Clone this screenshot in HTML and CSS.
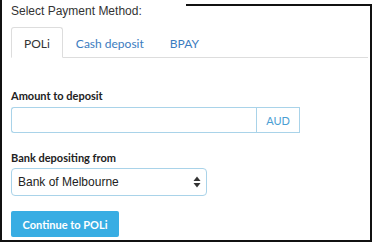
FILE: index.html
```html
<!DOCTYPE html>
<html lang="en">
<head>
    <meta charset="UTF-8">
    <meta name="viewport" content="width=device-width, initial-scale=1.0">
    <title>Select Payment Method</title>
    <link rel="stylesheet" href="styles.css">
</head>
<body>
    <div class="panel">
        <div class="panel-head">
            <span class="panel-title">Select Payment Method:</span>
            <span class="panel-rule"></span>
        </div>
        <div class="panel-body">
            <ul class="tabs">
                <li class="tab active"><a href="#">POLi</a></li>
                <li class="tab"><a href="#">Cash deposit</a></li>
                <li class="tab"><a href="#">BPAY</a></li>
            </ul>
            <form class="pay-form">
                <label class="field-label" for="amount">Amount to deposit</label>
                <div class="input-group">
                    <input type="text" id="amount" name="amount">
                    <span class="addon">AUD</span>
                </div>
                <label class="field-label bank-label" for="bank">Bank depositing from</label>
                <div class="select-wrap">
                    <select id="bank" name="bank">
                        <option>Bank of Melbourne</option>
                        <option>Commonwealth Bank</option>
                        <option>Westpac</option>
                    </select>
                    <svg class="select-arrows" width="8" height="12" viewBox="0 0 8 12">
                        <path d="M4 0.5 L7.5 5 L0.5 5 Z" fill="#333"/>
                        <path d="M0.5 7 L7.5 7 L4 11.5 Z" fill="#333"/>
                    </svg>
                </div>
                <button type="button" class="continue-btn">Continue to POLi</button>
            </form>
        </div>
    </div>
</body>
</html>
```

FILE: styles.css
```css
body {
    margin: 0;
    background: #ffffff;
    font-family: Lato, "Liberation Sans", sans-serif;
}
.panel {
    width: 372px;
    height: 242px;
    box-sizing: border-box;
    border-left: 2px solid #111;
    border-bottom: 2px solid #111;
    display: flex;
    flex-direction: column;
}
.panel-head {
    display: flex;
    height: 27px;
}
.panel-title {
    width: 184px;
    padding: 4px 0 0 9px;
    box-sizing: border-box;
    font-family: "Liberation Sans", Arial, sans-serif;
    font-size: 12px;
    line-height: 14px;
    color: #333;
}
.panel-rule {
    flex: 1;
    margin-top: 4px;
    border-top: 2px solid #111;
    border-right: 2px solid #111;
}
.panel-body {
    flex: 1;
    border-right: 2px solid #111;
    padding: 0 2px 0 9px;
}
.tabs {
    list-style: none;
    margin: 0;
    padding: 0;
    display: flex;
    border-bottom: 1px solid #ddd;
}
.tab {
    margin-bottom: -1px;
}
.tab a {
    display: block;
    height: 31px;
    box-sizing: border-box;
    padding: 9px 12px 0 12px;
    border: 1px solid transparent;
    border-radius: 3px 3px 0 0;
    font-size: 12px;
    line-height: 14px;
    color: #3b7cc0;
    text-decoration: none;
}
.tab.active a {
    color: #333;
    border-color: #ddd;
    border-bottom-color: #fff;
    background: #fff;
}
.pay-form {
    padding-top: 31px;
    display: flex;
    flex-direction: column;
    align-items: flex-start;
}
.field-label {
    font-size: 11px;
    line-height: 14px;
    font-weight: bold;
    color: #222;
    margin-bottom: 4px;
}
.bank-label {
    margin-top: 18px;
    margin-bottom: 3px;
}
.input-group {
    display: flex;
    height: 26px;
}
.input-group input {
    width: 245px;
    height: 26px;
    box-sizing: border-box;
    border: 1px solid #a9d3e9;
    border-right: none;
    border-radius: 3px 0 0 3px;
    padding: 0 8px;
    font-size: 12px;
}
.addon {
    width: 44px;
    box-sizing: border-box;
    border: 1px solid #a9d3e9;
    display: flex;
    align-items: center;
    justify-content: center;
    font-size: 11px;
    color: #4a9ed3;
}
.select-wrap {
    position: relative;
}
.select-wrap select {
    -webkit-appearance: none;
    appearance: none;
    width: 196px;
    height: 28px;
    box-sizing: border-box;
    border: 1px solid #a9d3e9;
    border-radius: 4px;
    background: #fff;
    padding: 0 6px;
    font-family: "Liberation Sans", Arial, sans-serif;
    font-size: 12px;
    color: #222;
}
.select-arrows {
    position: absolute;
    right: 6px;
    top: 8px;
    pointer-events: none;
}
.continue-btn {
    margin-top: 15px;
    width: 108px;
    height: 26px;
    border: none;
    border-radius: 2px;
    background: #38ade3;
    color: #fff;
    font-family: Lato, "Liberation Sans", sans-serif;
    font-size: 11px;
    font-weight: bold;
    padding: 0;
    cursor: pointer;
}
```
